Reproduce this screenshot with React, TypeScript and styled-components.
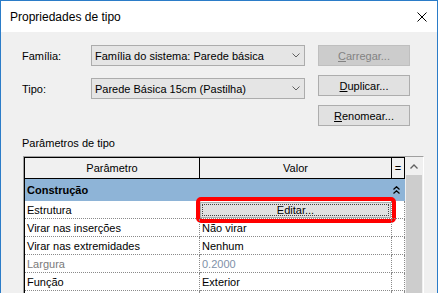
import React from 'react';
import styled, { createGlobalStyle } from 'styled-components';

const WINDOW_BLUE = '#2b7cc8';
const FACE = '#f0f0f0';
const FONT = '"Liberation Sans", Arial, sans-serif';
const DOTS = '1px dotted #8a8a8a';

const GlobalStyle = createGlobalStyle`
  html, body {
    margin: 0;
    padding: 0;
    background: #fff;
  }
  body {
    font-family: ${FONT};
    font-size: 11px;
    color: #000;
  }
  * {
    box-sizing: border-box;
  }
`;

const Dialog = styled.div`
  position: relative;
  width: 438px;
  height: 293px;
  overflow: hidden;
  display: flex;
  flex-direction: column;
  background: ${FACE};
  border: 1px solid ${WINDOW_BLUE};
  border-bottom: none;
`;

const TitleBar = styled.div`
  flex: none;
  height: 31px;
  display: flex;
  align-items: center;
  justify-content: space-between;
  padding-left: 9px;
  background: #fff;
  font-size: 12px;
`;

const CloseBtn = styled.div`
  width: 30px;
  height: 31px;
  display: flex;
  align-items: center;
  justify-content: center;
`;

const Body = styled.div`
  flex: 1;
  display: flex;
  flex-direction: column;
  padding: 13px 0 0 21px;
  min-height: 0;
`;

const TopSection = styled.div`
  flex: none;
  display: flex;
  gap: 13px;
`;

const Fields = styled.div`
  display: flex;
  flex-direction: column;
  gap: 12px;
`;

const FieldRow = styled.div`
  display: flex;
  align-items: center;
  height: 21px;
`;

const FieldLabel = styled.span`
  width: 69px;
`;

const Combo = styled.div`
  width: 214px;
  height: 21px;
  display: flex;
  align-items: center;
  justify-content: space-between;
  padding: 0 4px 0 3px;
  background: #e5e5e5;
  border: 1px solid #acacac;
`;

const Buttons = styled.div`
  display: flex;
  flex-direction: column;
  gap: 9px;
`;

const Button = styled.div<{ disabled?: boolean }>`
  width: 92px;
  height: 21px;
  display: flex;
  align-items: center;
  justify-content: center;
  background: ${({ disabled }) => (disabled ? '#cccccc' : '#e1e1e1')};
  border: 1px solid ${({ disabled }) => (disabled ? '#bfbfbf' : '#adadad')};
  color: ${({ disabled }) => (disabled ? '#838383' : '#000')};
`;

const SectionLabel = styled.div`
  flex: none;
  margin-top: 10px;
  height: 14px;
  line-height: 14px;
`;

const GridBox = styled.div`
  flex: 1;
  display: flex;
  width: 401px;
  margin: 6px 0 0 1px;
  border-top: 1px solid #a0a0a0;
  border-left: 1px solid #a0a0a0;
  border-right: 1px solid #fff;
  min-height: 0;
  overflow: hidden;
`;

const Table = styled.div`
  width: 381px;
  display: flex;
  flex-direction: column;
  background: #fff;
  border-left: 1px solid #000;
`;

const COLS = '175px 192px 13px';

const HeaderRow = styled.div`
  flex: none;
  display: grid;
  grid-template-columns: ${COLS};
  height: 22px;
  background: ${FACE};
  border-top: 1px solid #000;
  border-bottom: 1px solid #000;
`;

const HeaderCell = styled.div`
  display: flex;
  align-items: center;
  justify-content: center;
  border-right: 1px solid #000;
`;

const GroupRow = styled.div`
  flex: none;
  height: 22px;
  display: flex;
  align-items: center;
  justify-content: space-between;
  padding: 0 5px 0 2px;
  background: #8eb4d7;
  font-weight: bold;
`;

const DataRow = styled.div`
  flex: none;
  display: grid;
  grid-template-columns: ${COLS};
  height: 18px;
`;

const Cell = styled.div<{ muted?: boolean; tone?: 'label' | 'value' }>`
  position: relative;
  display: flex;
  align-items: center;
  padding-left: 2px;
  border-right: ${DOTS};
  border-bottom: ${DOTS};
  white-space: nowrap;
  color: ${({ muted, tone }) => (!muted ? '#000' : tone === 'value' ? '#8090a8' : '#7a7a7a')};
`;

const EditButton = styled.div`
  align-self: flex-start;
  margin-top: 1px;
  margin-left: -2px;
  width: 191px;
  height: 16px;
  display: flex;
  align-items: center;
  justify-content: center;
  background: #e1e1e1;
  border: 1px solid #adadad;
  outline: 1px dotted #444;
  outline-offset: -3px;
`;

const Highlight = styled.div`
  position: absolute;
  left: -4px;
  top: -4px;
  width: 200px;
  height: 26px;
  border: 4px solid #ff0000;
  border-radius: 5px;
  pointer-events: none;
`;

const ScrollBar = styled.div`
  width: 18px;
  display: flex;
  flex-direction: column;
  background: ${FACE};
`;

const ScrollArrow = styled.div`
  flex: none;
  height: 18px;
  display: flex;
  align-items: center;
  justify-content: center;
`;

const ScrollThumb = styled.div`
  flex: 1;
  margin: 0 1px;
  background: #cdcdcd;
`;

const Chevron = () => (
  <svg width="8" height="5" viewBox="0 0 8 5">
    <polyline points="0.5,0.5 4,4 7.5,0.5" fill="none" stroke="#606060" strokeWidth="1" />
  </svg>
);

const rows = [
  { name: 'Virar nas inserções', value: 'Não virar' },
  { name: 'Virar nas extremidades', value: 'Nenhum' },
  { name: 'Largura', value: '0.2000', muted: true },
  { name: 'Função', value: 'Exterior' },
  { name: '', value: '' },
];

const App = () => (
  <>
    <GlobalStyle />
    <Dialog>
      <TitleBar>
        <span>Propriedades de tipo</span>
        <CloseBtn>
          <svg width="10" height="10" viewBox="0 0 10 10">
            <path d="M0.5 0.5 L9.5 9.5 M9.5 0.5 L0.5 9.5" stroke="#000" strokeWidth="1" />
          </svg>
        </CloseBtn>
      </TitleBar>
      <Body>
        <TopSection>
          <Fields>
            <FieldRow>
              <FieldLabel>Família:</FieldLabel>
              <Combo>
                <span>Família do sistema: Parede básica</span>
                <Chevron />
              </Combo>
            </FieldRow>
            <FieldRow>
              <FieldLabel>Tipo:</FieldLabel>
              <Combo>
                <span>Parede Básica 15cm (Pastilha)</span>
                <Chevron />
              </Combo>
            </FieldRow>
          </Fields>
          <Buttons>
            <Button disabled>
              <span><u>C</u>arregar...</span>
            </Button>
            <Button>
              <span><u>D</u>uplicar...</span>
            </Button>
            <Button>
              <span><u>R</u>enomear...</span>
            </Button>
          </Buttons>
        </TopSection>
        <SectionLabel>Parâmetros de tipo</SectionLabel>
        <GridBox>
          <Table>
            <HeaderRow>
              <HeaderCell>Parâmetro</HeaderCell>
              <HeaderCell>Valor</HeaderCell>
              <HeaderCell>=</HeaderCell>
            </HeaderRow>
            <GroupRow>
              <span>Construção</span>
              <svg width="7" height="8" viewBox="0 0 7 8">
                <path d="M0.5 3.5 L3.5 0.7 L6.5 3.5 M0.5 7.5 L3.5 4.7 L6.5 7.5" fill="none" stroke="#000" strokeWidth="1.2" />
              </svg>
            </GroupRow>
            <DataRow>
              <Cell>Estrutura</Cell>
              <Cell>
                <EditButton>Editar...</EditButton>
                <Highlight />
              </Cell>
              <Cell />
            </DataRow>
            {rows.map((r, i) => (
              <DataRow key={i}>
                <Cell muted={r.muted} tone="label">{r.name}</Cell>
                <Cell muted={r.muted} tone="value">{r.value}</Cell>
                <Cell />
              </DataRow>
            ))}
          </Table>
          <ScrollBar>
            <ScrollArrow>
              <svg width="8" height="5" viewBox="0 0 8 5">
                <polyline points="0.5,4.5 4,1 7.5,4.5" fill="none" stroke="#606060" strokeWidth="1.3" />
              </svg>
            </ScrollArrow>
            <ScrollThumb />
          </ScrollBar>
        </GridBox>
      </Body>
    </Dialog>
  </>
);

export default App;
